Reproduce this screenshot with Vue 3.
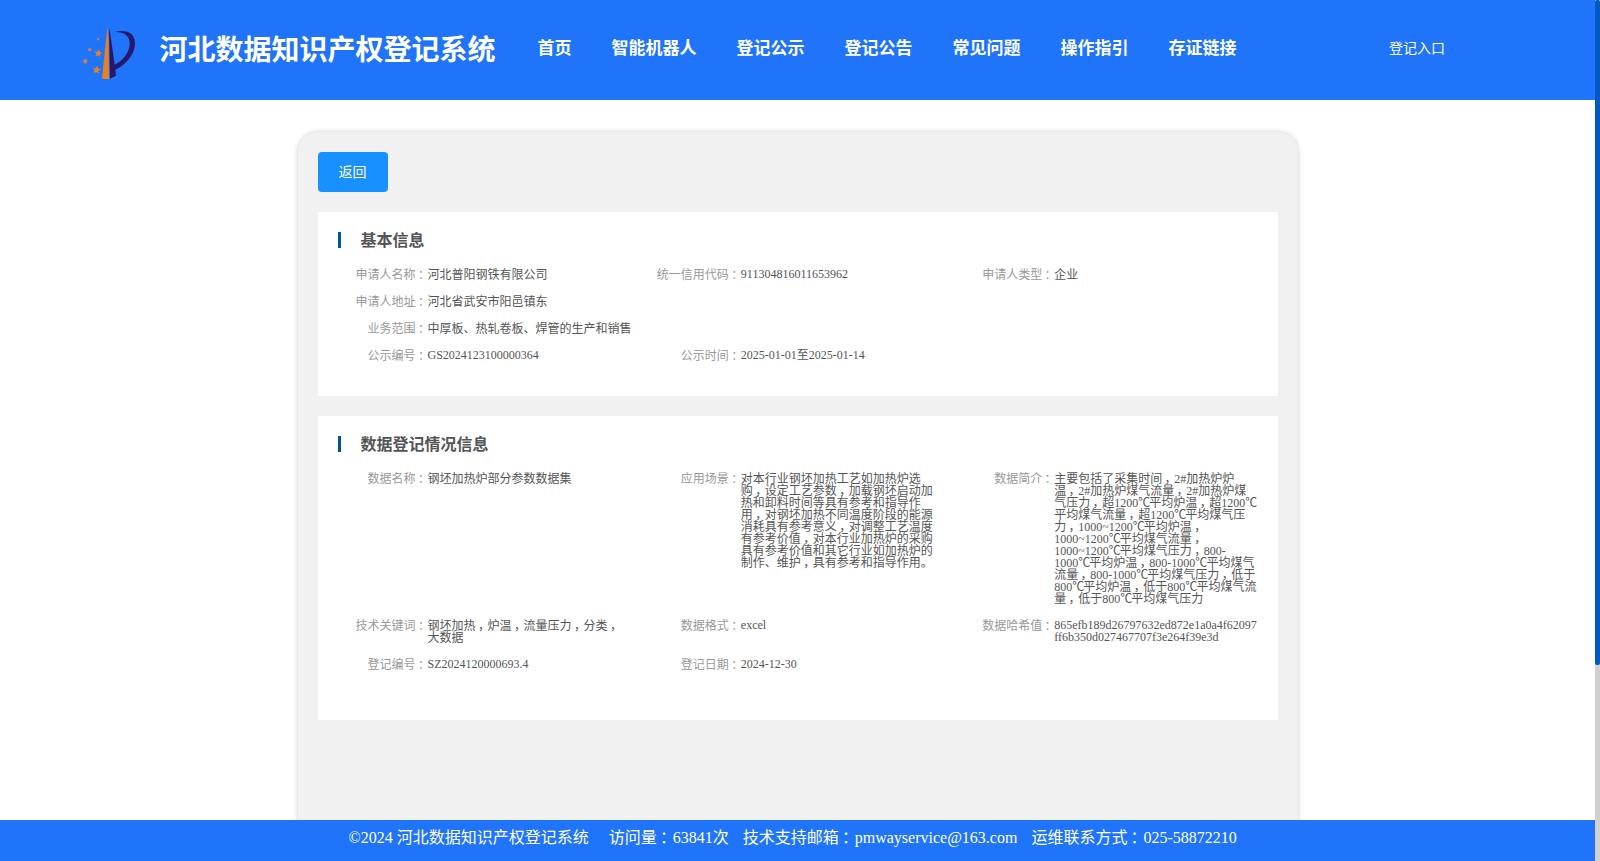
<template>
  <div class="page">
    <div class="content">
      <header class="header">
        <svg class="logo" viewBox="0 0 210 195">
          <path class="orange" d="M98 22 L101 60 L102 178 L81 176 L92 70 Z" />
          <path
            class="purple"
            d="M102 24 L106 42 L119 134 C142 124 163 99 164 73 C165 48 151 37 120 35 C153 28 179 37 180 68 C181 103 151 135 121 149 L123 167 L105 176 Z"
          />
          <path v-for="star in stars" :key="star.x" class="orange" :d="starPath(star)" />
        </svg>
        <h1 class="site-title">河北数据知识产权登记系统</h1>
        <nav class="nav">
          <a v-for="item in navItems" :key="item">{{ item }}</a>
        </nav>
        <a class="entry">登记入口</a>
      </header>

      <main class="main">
        <div class="card">
          <button class="back" type="button">返回</button>
          <section v-for="section in sections" :key="section.title" class="section">
            <h2 class="section-title">{{ section.title }}</h2>
            <div class="fields">
              <div v-for="field in section.fields" :key="field.label" class="field" :class="{ wide: field.wide }">
                <span class="label">{{ field.label }}<span class="punct">：</span></span>
                <span class="value" :class="{ chinese: isChinese(field.value) }"><span v-for="(part, i) in splitText(field.value)" :key="i" :class="partClass(part)">{{ part }}</span></span>
              </div>
            </div>
          </section>
        </div>
      </main>

      <footer class="footer">
        <span v-for="text in footerItems" :key="text" class="footer-item"><span v-for="(part, i) in splitText(text)" :key="i" :class="partClass(part)">{{ part }}</span></span>
      </footer>
    </div>
    <div class="scroll-track">
      <div class="scroll-thumb"></div>
    </div>
  </div>
</template>

<script setup>
const navItems = ['首页', '智能机器人', '登记公示', '登记公告', '常见问题', '操作指引', '存证链接'];

const footerItems = [
  '©2024 河北数据知识产权登记系统',
  '访问量：63841次',
  '技术支持邮箱：pmwayservice@163.com',
  '运维联系方式：025-58872210',
];

const stars = [
  { x: 69, y: 58, r: 5 },
  { x: 44, y: 89, r: 7 },
  { x: 70, y: 100, r: 12 },
  { x: 31, y: 124, r: 9 },
  { x: 65, y: 150, r: 13 },
];

const starPath = ({ x, y, r }) => {
  const points = [];
  for (let i = 0; i < 10; i++) {
    const radius = i % 2 ? r * 0.48 : r;
    const angle = (i * Math.PI) / 5 - Math.PI / 2 + 0.15;
    points.push(`${x + radius * Math.cos(angle)} ${y + radius * Math.sin(angle)}`);
  }
  return `M${points.join(' L')} Z`;
};

// punctuation and the degree sign get their own spans
const splitText = (text) => text.split(/([，：℃])/).filter(Boolean);

const partClass = (part) => {
  if (part === '，' || part === '：') return 'punct';
  if (part === '℃') return 'degree';
  return null;
};

const isChinese = (text) => /^[\u4e00-\u9fa5]{2}/.test(text);

const sections = [
  {
    title: '基本信息',
    fields: [
      { label: '申请人名称', value: '河北普阳钢铁有限公司' },
      { label: '统一信用代码', value: '911304816011653962' },
      { label: '申请人类型', value: '企业' },
      { label: '申请人地址', value: '河北省武安市阳邑镇东', wide: true },
      { label: '业务范围', value: '中厚板、热轧卷板、焊管的生产和销售', wide: true },
      { label: '公示编号', value: 'GS2024123100000364' },
      { label: '公示时间', value: '2025-01-01至2025-01-14' },
    ],
  },
  {
    title: '数据登记情况信息',
    fields: [
      { label: '数据名称', value: '钢坯加热炉部分参数数据集' },
      {
        label: '应用场景',
        value:
          '对本行业钢坯加热工艺如加热炉选购，设定工艺参数，加载钢坯启动加热和卸料时间等具有参考和指导作用，对钢坯加热不同温度阶段的能源消耗具有参考意义，对调整工艺温度有参考价值，对本行业加热炉的采购具有参考价值和其它行业如加热炉的制作、维护，具有参考和指导作用。',
      },
      {
        label: '数据简介',
        value:
          '主要包括了采集时间，2#加热炉炉温，2#加热炉煤气流量，2#加热炉煤气压力，超1200℃平均炉温，超1200℃平均煤气流量，超1200℃平均煤气压力，1000~1200℃平均炉温，1000~1200℃平均煤气流量，1000~1200℃平均煤气压力，800-1000℃平均炉温，800-1000℃平均煤气流量，800-1000℃平均煤气压力，低于800℃平均炉温，低于800℃平均煤气流量，低于800℃平均煤气压力',
      },
      { label: '技术关键词', value: '钢坯加热，炉温，流量压力，分类，大数据' },
      { label: '数据格式', value: 'excel' },
      { label: '数据哈希值', value: '865efb189d26797632ed872e1a0a4f62097ff6b350d027467707f3e264f39e3d' },
      { label: '登记编号', value: 'SZ2024120000693.4' },
      { label: '登记日期', value: '2024-12-30' },
    ],
  },
];
</script>

<style>
body {
  margin: 0;
  overflow: hidden;
}
</style>

<style scoped>
.page {
  display: flex;
  height: 861px;
  font-family: "Liberation Serif", "Noto Sans CJK SC", serif;
  background-color: #fff;
}

.content {
  flex: 1;
  min-width: 0;
  display: flex;
  flex-direction: column;
}

.header {
  flex: none;
  display: flex;
  align-items: flex-start;
  height: 100px;
  color: #fff;
  background-color: #2074f9;
}

.logo {
  width: 70px;
  height: 65px;
  margin: 20px 0 0 75px;
}

.orange {
  fill: #e78123;
}

.purple {
  fill: #27186f;
}

.site-title {
  margin: 31px 0 0 14.5px;
  font-size: 28px;
  line-height: 40px;
  white-space: nowrap;
}

.nav {
  display: flex;
  gap: 40px;
  margin: 39px 0 0 42px;
  font-size: 17px;
  font-weight: bold;
  line-height: 20px;
  white-space: nowrap;
}

.entry {
  margin: 39px 0 0 152.5px;
  font-size: 14px;
  line-height: 20px;
}

.main {
  flex: 1;
  min-height: 0;
  display: flex;
  justify-content: center;
  padding-top: 32px;
  overflow: hidden;
}

.card {
  width: 1000px;
  height: 800px;
  padding: 20px;
  box-sizing: border-box;
  border-radius: 20px;
  background-color: #f1f1f1;
  box-shadow: 0 0 5px #ccc;
}

.back {
  display: block;
  width: 70px;
  height: 40px;
  padding: 2px 0 0;
  border: none;
  border-radius: 4px;
  color: #fff;
  font-family: inherit;
  font-size: 14px;
  line-height: 38px;
  background-color: #1890ff;
}

.section {
  min-height: 184px;
  margin-top: 20px;
  padding: 20px 20px 20px 0;
  box-sizing: border-box;
  background-color: #fff;
}

.section:last-child {
  padding-bottom: 35px;
}

.section-title {
  height: 16px;
  margin: 0 0 20px 20px;
  padding-left: 20px;
  border-left: 3px solid #005397;
  color: #555;
  font-size: 16px;
  line-height: 18px;
}

.fields {
  display: flex;
  flex-wrap: wrap;
}

.field {
  display: flex;
  width: 33.3333%;
  margin-bottom: 15px;
  font-size: 12px;
  line-height: 12px;
}

.field.wide {
  width: 100%;
}

.label {
  flex: none;
  width: 110px;
  margin-bottom: -1px;
  padding-top: 1px;
  color: #999;
  text-align: right;
}

.value {
  flex: 1;
  min-width: 0;
  color: #555;
  overflow-wrap: anywhere;
}

.value.chinese {
  margin-bottom: -1px;
  padding-top: 1px;
}

/* centres the mark inside its full-width cell */
.punct {
  padding-left: 0.2em;
  letter-spacing: -0.2em;
}

.degree {
  letter-spacing: -0.9px;
}

.footer {
  flex: none;
  display: flex;
  gap: 14px;
  height: 41px;
  padding-left: 348.5px;
  color: #fff;
  font-size: 16px;
  line-height: 36px;
  white-space: nowrap;
  background-color: #2074f9;
}

.footer-item:first-child {
  margin-right: 6px;
}

.scroll-track {
  flex: none;
  width: 5px;
  background-color: #d1d1d1;
}

.scroll-thumb {
  height: 665px;
  border-radius: 2px;
  background-color: #0058c5;
}
</style>
